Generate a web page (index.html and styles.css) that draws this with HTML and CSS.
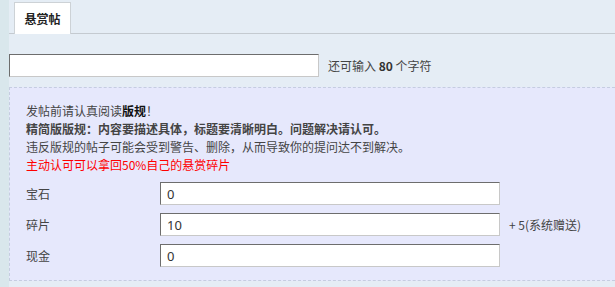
FILE: index.html
```html
<!DOCTYPE html>
<html lang="zh-CN">
<head>
  <meta charset="UTF-8">
  <title>悬赏帖</title>
  <link rel="stylesheet" href="styles.css">
</head>
<body>
  <div class="sidebar"></div>
  <div class="main">
    <div class="tabs">
      <div class="tab active">悬赏帖</div>
    </div>

    <div class="title-row">
      <input type="text" class="title-input">
      <span class="hint">还可输入 <b>80</b> 个字符</span>
    </div>

    <div class="notice">
      <p>发帖前请认真阅读<b class="dark">版规</b>！</p>
      <p class="strong">精简版版规：内容要描述具体，标题要清晰明白。问题解决请认可。</p>
      <p>违反版规的帖子可能会受到警告、删除，从而导致你的提问达不到解决。</p>
      <p class="red">主动认可可以拿回50%自己的悬赏碎片</p>

      <div class="reward-form">
        <label>宝石</label>
        <input type="text" value="0">
        <span></span>

        <label>碎片</label>
        <input type="text" value="10">
        <span class="extra">+ 5(系统赠送)</span>

        <label>现金</label>
        <input type="text" value="0">
        <span></span>
      </div>
    </div>
  </div>
</body>
</html>
```

FILE: styles.css
```css
body {
  margin: 0;
  display: flex;
  min-height: 287px;
  background-color: #e5edf5;
  font-family: "Noto Sans CJK SC", "Noto Sans", sans-serif;
  font-size: 12px;
  color: #444;
}
.sidebar {
  width: 9px;
  background-color: #d9e7ec;
}
.main {
  flex: 1;
}
.tabs {
  height: 33px;
  border-bottom: 1px solid #c4cad0;
  display: flex;
  align-items: flex-end;
  padding-left: 5px;
}
.tab {
  width: 55px;
  height: 31px;
  margin-bottom: -1px;
  background: white;
  border: 1px solid #cdd2d6;
  border-bottom: none;
  text-align: center;
  line-height: 31px;
  font-weight: bold;
  color: #222;
}
.title-row {
  display: flex;
  align-items: center;
  margin-top: 20px;
  height: 23px;
}
.title-input {
  width: 310px;
  height: 23px;
  box-sizing: border-box;
  margin: 0;
  border: 1px solid;
  border-color: #6d6d6d #c8c8c8 #c8c8c8 #6d6d6d;
  background: white;
}
.hint {
  margin-left: 9px;
  color: #444;
}
.hint b {
  color: #333;
}
.notice {
  margin-top: 10px;
  background-color: #e6e8fc;
  border: 1px dashed #c5cde0;
  border-right: none;
  padding: 14px 0 13px 16px;
}
.notice p {
  margin: 0;
  line-height: 18px;
}
.notice .strong {
  font-weight: bold;
  color: #444;
}
.notice .dark {
  color: #111;
}
.notice .red {
  color: #f00;
}
.reward-form {
  display: grid;
  grid-template-columns: 134px 340px auto;
  row-gap: 8px;
  align-items: center;
  margin-top: 8px;
}
.reward-form label {
  color: #444;
}
.reward-form input {
  height: 23px;
  box-sizing: border-box;
  margin: 0;
  padding: 0 6px;
  border: 1px solid;
  border-color: #6d6d6d #c8c8c8 #c8c8c8 #6d6d6d;
  background: white;
  font-family: "Noto Sans", "Noto Sans CJK SC", sans-serif;
  font-size: 13px;
  color: #333;
}
.extra {
  margin-left: 9px;
  color: #444;
}
```
